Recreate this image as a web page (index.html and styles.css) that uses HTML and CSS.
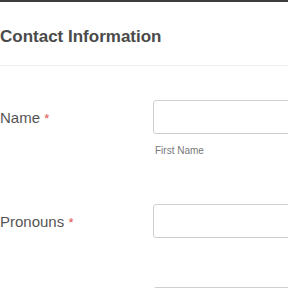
FILE: index.html
```html
<!DOCTYPE html>
<html>
<head>
<meta charset="utf-8">
<link rel="stylesheet" href="styles.css">
</head>
<body>
<div class="page">
  <div class="header">
    <h2 class="title">Contact Information</h2>
  </div>
  <div class="form">
    <div class="row row-name">
      <label class="label">Name <span class="req">*</span></label>
      <div class="field">
        <div class="input"></div>
        <div class="caption">First Name</div>
      </div>
    </div>
    <div class="row row-pronouns">
      <label class="label">Pronouns <span class="req">*</span></label>
      <div class="field">
        <div class="input"></div>
      </div>
    </div>
    <div class="row">
      <div class="label"></div>
      <div class="field">
        <div class="input"></div>
      </div>
    </div>
  </div>
</div>
</body>
</html>
```
FILE: styles.css
```css
html, body {
  margin: 0;
  padding: 0;
  background: #fff;
  overflow: hidden;
  width: 288px;
  height: 288px;
}
.page {
  border-top: 2px solid #3c3c3c;
  font-family: "Liberation Sans", Arial, sans-serif;
  color: #555;
}
.header {
  height: 64px;
  border-bottom: 1px solid #eeeeee;
  box-sizing: border-box;
  padding-top: 25px;
}
.title {
  margin: 0;
  font-size: 17px;
  font-weight: bold;
  line-height: 20px;
  color: #4a4a4a;
}
.form {
  padding-top: 34px;
}
.row {
  display: grid;
  grid-template-columns: 153px 200px;
  margin-bottom: 48px;
}
.row-name {
  margin-bottom: 47px;
}
.label {
  font-size: 15px;
  line-height: 32px;
  padding-top: 2px;
  color: #555;
}
.req {
  color: #e05050;
  font-size: 13px;
}
.input {
  height: 34px;
  box-sizing: border-box;
  border: 1px solid #cfcfcf;
  border-radius: 3px;
  background: #fff;
}
.caption {
  margin-top: 10px;
  margin-left: 2px;
  font-size: 10px;
  line-height: 13px;
  color: #777;
}
```
